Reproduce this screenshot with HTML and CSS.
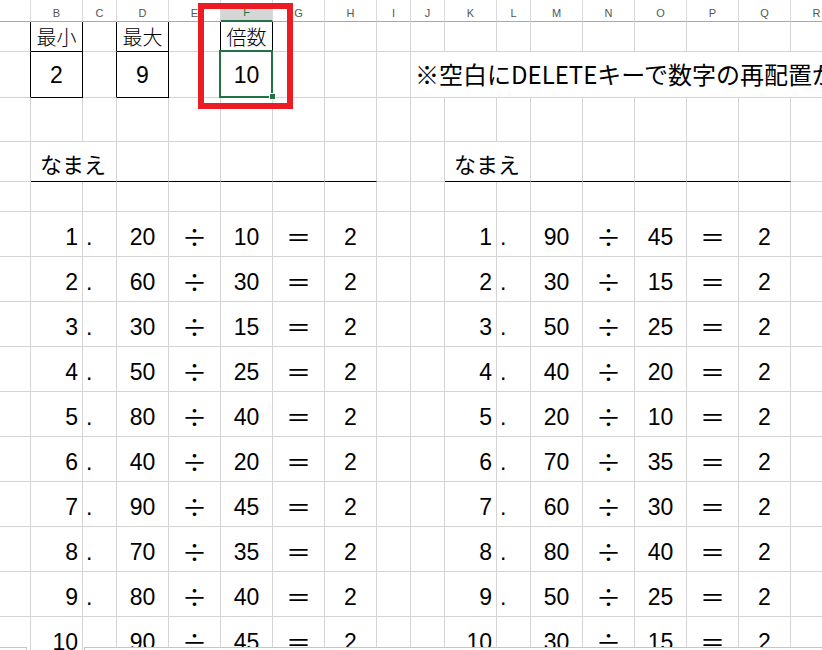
FILE: index.html
```html
<!DOCTYPE html>
<html lang="ja">
<head>
<meta charset="utf-8">
<title>わり算プリント</title>
<link rel="stylesheet" href="styles.css">
</head>
<body>
<div class="sheet">
  <div class="hd"></div><div class="hd">B</div><div class="hd">C</div><div class="hd">D</div><div class="hd">E</div><div class="hd sel">F</div><div class="hd">G</div><div class="hd">H</div><div class="hd">I</div><div class="hd">J</div><div class="hd">K</div><div class="hd">L</div><div class="hd">M</div><div class="hd">N</div><div class="hd">O</div><div class="hd">P</div><div class="hd">Q</div><div class="hd">R</div>

  <div class="kr"></div><div class="lbl kr kb">最小</div><div class="kr"></div><div class="lbl kr kb">最大</div><div class="kr"></div><div class="lbl kr kb">倍数</div><div></div><div></div><div></div><div></div><div></div><div></div><div></div><div></div><div></div><div></div><div></div><div></div>

  <div class="kr"></div><div class="val kr kb">2</div><div class="kr"></div><div class="val kr kb">9</div><div class="kr"></div><div class="val kr kb active">10</div><div></div><div></div><div></div><div class="note">※空白にDELETEキーで数字の再配置が</div>

  <div></div><div></div><div></div><div></div><div></div><div></div><div></div><div></div><div></div><div></div><div></div><div></div><div></div><div></div><div></div><div></div><div></div><div></div>

  <div></div><div class="name ul">なまえ</div><div class="ul"></div><div class="ul"></div><div class="ul"></div><div class="ul"></div><div class="ul"></div><div></div><div></div><div class="name ul">なまえ</div><div class="ul"></div><div class="ul"></div><div class="ul"></div><div class="ul"></div><div class="ul"></div><div></div>

  <div></div><div></div><div></div><div></div><div></div><div></div><div></div><div></div><div></div><div></div><div></div><div></div><div></div><div></div><div></div><div></div><div></div><div></div>

  <div></div><div class="q r">1</div><div class="q d">.</div><div class="q c">20</div><div class="q c o">÷</div><div class="q c">10</div><div class="q c o">＝</div><div class="q c">2</div><div></div><div></div><div class="q r">1</div><div class="q d">.</div><div class="q c">90</div><div class="q c o">÷</div><div class="q c">45</div><div class="q c o">＝</div><div class="q c">2</div><div></div>
  <div></div><div class="q r">2</div><div class="q d">.</div><div class="q c">60</div><div class="q c o">÷</div><div class="q c">30</div><div class="q c o">＝</div><div class="q c">2</div><div></div><div></div><div class="q r">2</div><div class="q d">.</div><div class="q c">30</div><div class="q c o">÷</div><div class="q c">15</div><div class="q c o">＝</div><div class="q c">2</div><div></div>
  <div></div><div class="q r">3</div><div class="q d">.</div><div class="q c">30</div><div class="q c o">÷</div><div class="q c">15</div><div class="q c o">＝</div><div class="q c">2</div><div></div><div></div><div class="q r">3</div><div class="q d">.</div><div class="q c">50</div><div class="q c o">÷</div><div class="q c">25</div><div class="q c o">＝</div><div class="q c">2</div><div></div>
  <div></div><div class="q r">4</div><div class="q d">.</div><div class="q c">50</div><div class="q c o">÷</div><div class="q c">25</div><div class="q c o">＝</div><div class="q c">2</div><div></div><div></div><div class="q r">4</div><div class="q d">.</div><div class="q c">40</div><div class="q c o">÷</div><div class="q c">20</div><div class="q c o">＝</div><div class="q c">2</div><div></div>
  <div></div><div class="q r">5</div><div class="q d">.</div><div class="q c">80</div><div class="q c o">÷</div><div class="q c">40</div><div class="q c o">＝</div><div class="q c">2</div><div></div><div></div><div class="q r">5</div><div class="q d">.</div><div class="q c">20</div><div class="q c o">÷</div><div class="q c">10</div><div class="q c o">＝</div><div class="q c">2</div><div></div>
  <div></div><div class="q r">6</div><div class="q d">.</div><div class="q c">40</div><div class="q c o">÷</div><div class="q c">20</div><div class="q c o">＝</div><div class="q c">2</div><div></div><div></div><div class="q r">6</div><div class="q d">.</div><div class="q c">70</div><div class="q c o">÷</div><div class="q c">35</div><div class="q c o">＝</div><div class="q c">2</div><div></div>
  <div></div><div class="q r">7</div><div class="q d">.</div><div class="q c">90</div><div class="q c o">÷</div><div class="q c">45</div><div class="q c o">＝</div><div class="q c">2</div><div></div><div></div><div class="q r">7</div><div class="q d">.</div><div class="q c">60</div><div class="q c o">÷</div><div class="q c">30</div><div class="q c o">＝</div><div class="q c">2</div><div></div>
  <div></div><div class="q r">8</div><div class="q d">.</div><div class="q c">70</div><div class="q c o">÷</div><div class="q c">35</div><div class="q c o">＝</div><div class="q c">2</div><div></div><div></div><div class="q r">8</div><div class="q d">.</div><div class="q c">80</div><div class="q c o">÷</div><div class="q c">40</div><div class="q c o">＝</div><div class="q c">2</div><div></div>
  <div></div><div class="q r">9</div><div class="q d">.</div><div class="q c">80</div><div class="q c o">÷</div><div class="q c">40</div><div class="q c o">＝</div><div class="q c">2</div><div></div><div></div><div class="q r">9</div><div class="q d">.</div><div class="q c">50</div><div class="q c o">÷</div><div class="q c">25</div><div class="q c o">＝</div><div class="q c">2</div><div></div>
  <div></div><div class="q r">10</div><div class="q d">.</div><div class="q c">90</div><div class="q c o">÷</div><div class="q c">45</div><div class="q c o">＝</div><div class="q c">2</div><div></div><div></div><div class="q r">10</div><div class="q d">.</div><div class="q c">30</div><div class="q c o">÷</div><div class="q c">15</div><div class="q c o">＝</div><div class="q c">2</div><div></div>

  <div class="mark"></div>
</div>
<div class="tabbar">
  <div class="tab-left"></div>
  <div class="tab-rest"></div>
</div>
</body>
</html>
```
FILE: styles.css
```css
html, body {
  margin: 0;
  padding: 0;
  background: #fff;
}
body {
  width: 822px;
  height: 650px;
  overflow: hidden;
  position: relative;
  font-family: "Liberation Sans", Arial, sans-serif;
  color: #000;
}
.sheet {
  position: relative;
  display: grid;
  grid-template-columns: 31px 52px 34px 52px 52px 52px 52px 52px 34px 34px 52px 34px 52px 52px 52px 52px 52px 52px;
  grid-template-rows: 22px 30px 46px 44px 40px 30px repeat(10, 45px);
  width: 894px;
}
.sheet > div {
  box-sizing: border-box;
  border-right: 1px solid #d4d4d4;
  border-bottom: 1px solid #d4d4d4;
  display: flex;
  align-items: flex-end;
  white-space: nowrap;
  min-width: 0;
}
/* column headers */
.sheet > .hd {
  border-right-color: #dadada;
  border-bottom-color: #a8a8a8;
  align-items: center;
  justify-content: center;
  padding-top: 5px;
  font-size: 11px;
  color: #555;
}
.sheet > .hd.sel {
  background: linear-gradient(#fff 0 5px, #d6d6d6 5px);
  border-bottom: 2px solid #217346;
  color: #217346;
  padding-top: 4px;
}
/* black box borders */
.sheet > .kr { border-right-color: #000; }
.sheet > .kb { border-bottom-color: #000; }
.sheet > .ul { border-bottom-color: #000; }

.lbl {
  font-family: "Noto Sans CJK JP", sans-serif;
  font-weight: 300;
  font-size: 20px;
  line-height: 20px;
  justify-content: center;
  padding-bottom: 4px;
}
.val {
  font-size: 23px;
  line-height: 23px;
  justify-content: center;
  padding-bottom: 10px;
}
.note {
  grid-column: span 9;
  font-family: "Noto Sans CJK JP", sans-serif;
  font-size: 24px;
  line-height: 24px;
  padding-left: 4px;
  padding-bottom: 11px;
  overflow: visible;
}
.name {
  grid-column: span 2;
  font-family: "Noto Sans CJK JP", sans-serif;
  font-size: 22px;
  line-height: 22px;
  padding-left: 9px;
  padding-bottom: 7px;
}
.q {
  font-size: 23px;
  line-height: 23px;
  padding-bottom: 7px;
}
.q.r { justify-content: flex-end; padding-right: 4px; }
.q.d { padding-left: 3px; }
.q.c { justify-content: center; }
.q.o {
  font-family: "Noto Sans CJK JP", sans-serif;
  font-weight: 400;
  font-size: 25px;
  line-height: 25px;
  padding-bottom: 7px;
}
/* active cell selection */
.active { position: relative; }
.active::after {
  content: "";
  position: absolute;
  left: -2px;
  top: -2px;
  width: 54px;
  height: 48px;
  box-sizing: border-box;
  border: 2px solid #217346;
}
.active::before {
  content: "";
  position: absolute;
  left: 48px;
  top: 41px;
  width: 7px;
  height: 7px;
  box-sizing: border-box;
  background: #217346;
  border: 1px solid #fff;
  z-index: 1;
}
/* red annotation frame */
.sheet > .mark {
  position: absolute;
  left: 198px;
  top: 3px;
  width: 95px;
  height: 106px;
  box-sizing: border-box;
  border: 6px solid #ec1c24;
}
/* bottom sheet-tab strip */
.tabbar {
  position: absolute;
  left: 0;
  top: 647px;
  width: 822px;
  height: 3px;
  display: flex;
  justify-content: space-between;
}
.tab-left {
  width: 26px;
  background: #fff;
  border-top: 1px solid #c6c6c6;
  border-right: 1px solid #c6c6c6;
}
.tab-rest {
  width: 737px;
  background: #fff;
  border-top: 1px solid #c6c6c6;
  border-left: 1px solid #c6c6c6;
}
```
